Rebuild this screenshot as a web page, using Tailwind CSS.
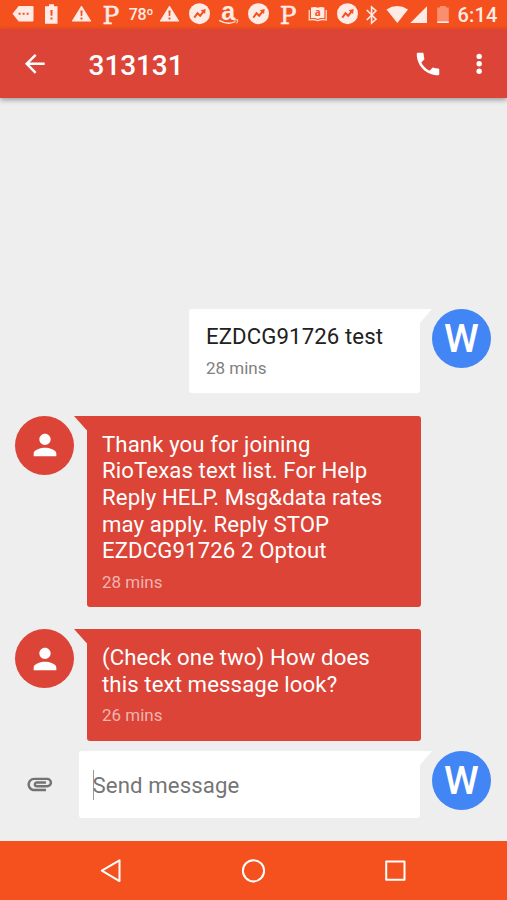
<!DOCTYPE html>
<html lang="en">
<head>
  <meta charset="UTF-8">
  <meta name="viewport" content="width=device-width, initial-scale=1.0">
  <title>Messenger - 313131</title>

  <!-- Tailwind CSS -->
  <script src="https://cdn.jsdelivr.net/npm/@tailwindcss/browser@4"></script>
</head>

<body class="bg-[#eeeeee] font-['Roboto',sans-serif]">

  <!-- Shared icons -->
  <svg class="hidden">
    <symbol id="warning" viewBox="0 0 30 29">
      <path d="M14.500 7.500 23.500 22H5.500Z" fill="#ffebe5" stroke="#ffebe5" stroke-width="1.200" stroke-linejoin="round"/>
      <path d="M13.400 11.500h2.200l-.4 5.500h-1.400zM13.500 18.500h2v2h-2z" fill="#f4511e"/>
    </symbol>
    <symbol id="trend" viewBox="0 0 30 29">
      <circle cx="14.500" cy="14.700" r="10.500" fill="#ffebe5"/>
      <path d="M9.300 18.600 12.500 14.200l2.700 2.600 3.600-4.700" fill="none" stroke="#f4511e" stroke-width="2"/>
      <path d="M15.700 11.200 20.700 10l-.6 5z" fill="#f4511e"/>
    </symbol>
    <symbol id="person" viewBox="0 0 24 24">
      <path d="M12 12c2.210 0 4-1.790 4-4s-1.790-4-4-4-4 1.790-4 4 1.790 4 4 4zm0 2c-2.670 0-8 1.340-8 4v2h16v-2c0-2.660-5.330-4-8-4z" fill="#fff"/>
    </symbol>
  </svg>

  <div class="flex h-[900px] w-[507px] flex-col overflow-hidden">

    <!-- Status bar -->
    <div class="flex h-[29px] shrink-0 items-center bg-[#f4511e] pl-[7.5px] text-[#ffebe5]">
      <div class="grid w-[354.6px] grid-cols-12">
        <svg class="h-[29px] w-[30px]" viewBox="0 0 30 29">
          <path d="M10.7 7H24.3Q25.5 7 25.5 8.2V21.3Q25.5 22.5 24.3 22.5H10.7L4.5 14.8Z" fill="#ffebe5"/>
          <path d="M10.6 13.8h2v2h-2zM14.6 13.8h2v2h-2zM18.6 13.8h2v2h-2z" fill="#f4511e"/>
        </svg>
        <svg class="h-[29px] w-[30px]" viewBox="0 0 30 29">
          <path d="M12 5.2h5v2h3.500v17.600H8V7.200h4z" fill="#ffebe5"/>
          <path d="M13.400 11h2.200l-.2 5.800h-1.800zM13.500 18.600h2v2h-2z" fill="#f4511e"/>
        </svg>
        <svg class="h-[29px] w-[30px]"><use href="#warning"/></svg>
        <span class="pt-0.5 text-center font-['DejaVu_Serif',serif] text-[25px] leading-[27px] [-webkit-text-stroke:0.5px_#ffebe5]"><span class="relative top-px">P</span></span>
        <span class="pl-px text-center text-[16px] leading-[31px] font-medium tracking-[-0.4px]">78º</span>
        <svg class="h-[29px] w-[30px]"><use href="#warning"/></svg>
        <svg class="h-[29px] w-[30px]"><use href="#trend"/></svg>
        <svg class="h-[29px] w-[30px] overflow-visible" viewBox="0 0 30 29">
          <text x="14.300" y="20.500" text-anchor="middle" class="font-['Liberation_Sans',sans-serif] text-[25px] font-bold" fill="#ffebe5">a</text>
          <path d="M5.200 21.300Q14 26.500 21.500 22.500" fill="none" stroke="#ffebe5" stroke-width="1.400"/>
          <path d="M19.500 20.900h4.300q.1 1.800-1.400 3.400" fill="none" stroke="#ffebe5" stroke-width="1"/>
        </svg>
        <svg class="h-[29px] w-[30px]"><use href="#trend"/></svg>
        <span class="pt-0.5 text-center font-['DejaVu_Serif',serif] text-[25px] leading-[27px] [-webkit-text-stroke:0.5px_#ffebe5]"><span class="relative top-px">P</span></span>
        <svg class="h-[29px] w-[30px]" viewBox="0 0 30 29">
          <path d="M8 8.500q4-1.300 6.700.3 2.700-1.600 6.700-.3v10.800q-4-1-6.700.6-2.700-1.600-6.700-.6z" fill="#ffebe5"/>
          <path d="M6.200 11v10q5-1 8.500.7 3.500-1.700 8.500-.7V11" fill="none" stroke="#ffebe5" stroke-width="1.100"/>
          <text x="14.700" y="17.300" text-anchor="middle" class="font-['Open_Sans',sans-serif] text-[10px] font-bold" fill="#f4511e">a</text>
        </svg>
        <svg class="h-[29px] w-[30px]"><use href="#trend"/></svg>
      </div>
      <svg class="h-[29px] w-[92px]" viewBox="362 0 92 29">
        <path d="M366.800 10 376 19.300 371.600 23V7L376 10.700 366.800 20" fill="none" stroke="#ffebe5" stroke-width="1.600"/>
        <path d="M397.300 23 386.500 9.400Q397.300 2.600 408 9.400Z" fill="#ffebe5"/>
        <path d="M427 6.300V23H410.300Z" fill="#ffebe5"/>
        <path d="M440 6h6v1.500h2.800V21.500h-11.600V7.500h2.800z" fill="#f98f6f"/>
        <path d="M437.200 21.300h11.600V23h-11.600z" fill="#ffebe5"/>
      </svg>
      <span class="ml-[3.5px] pt-px text-[20px] leading-[30px] font-medium tracking-[0.1px]">6:14</span>
    </div>

    <!-- App bar -->
    <header class="z-10 flex h-[69px] shrink-0 items-center bg-[#db4437] pr-[13px] pl-5 text-white shadow-[0_2px_5px_rgba(0,0,0,0.35)]">
      <svg class="size-[29.6px]" viewBox="0 0 24 24" fill="currentColor">
        <path d="M20 11H7.830l5.590-5.590L12 4l-8 8 8 8 1.410-1.410L7.830 13H20v-2z"/>
      </svg>
      <h1 class="ml-[39px] grow pt-[5px] text-[28px] leading-8 font-medium tracking-[-0.1px]">313131</h1>
      <svg class="mr-[21px] size-[30px]" viewBox="0 0 24 24" fill="currentColor">
        <path d="M6.620 10.790c1.440 2.830 3.760 5.140 6.590 6.590l2.200-2.200c.27-.27.67-.36 1.020-.24 1.120.37 2.330.57 3.570.57.55 0 1 .45 1 1V20c0 .55-.45 1-1 1-9.390 0-17-7.610-17-17 0-.55.45-1 1-1h3.500c.55 0 1 .45 1 1 0 1.250.2 2.450.57 3.570.11.35.03.74-.25 1.020l-2.200 2.200z"/>
      </svg>
      <svg class="size-[29.6px]" viewBox="0 0 24 24" fill="currentColor">
        <circle cx="12.300" cy="6" r="2.200"/><circle cx="12.300" cy="12" r="2.200"/><circle cx="12.300" cy="18" r="2.200"/>
      </svg>
    </header>

    <!-- Conversation -->
    <main class="flex grow flex-col justify-end text-[22.200px] leading-[26.700px] tracking-[0.100px]">
      <div class="flex items-start justify-end pr-4">
        <div class="h-[84.500px] w-[231px] rounded-[3px] rounded-tr-none bg-white pt-[14.500px] pl-[17px]">
          <p class="text-[#212121]">EZDCG91726 test</p>
          <p class="mt-[8px] text-[17px] leading-5 tracking-normal text-[#808080]">28 mins</p>
        </div>
        <svg class="h-[14px] w-3" viewBox="0 0 12 14"><path d="M0 0h12L0 14z" fill="#fff"/></svg>
        <div class="flex size-[59px] items-center justify-center rounded-full bg-[#4285f4] pt-0.5 text-[39.500px] font-medium tracking-normal text-white">W</div>
      </div>

      <div class="mt-[22.500px] flex items-start pl-[15px]">
        <div class="flex size-[59px] items-center justify-center rounded-full bg-[#db4437]">
          <svg class="size-[34px]"><use href="#person"/></svg>
        </div>
        <svg class="-mr-px h-[14px] w-[13.500px]" viewBox="0 0 13.500 14"><path d="M0 0h13.500v14h-1z" fill="#db4437"/></svg>
        <div class="h-[191px] w-[334.500px] rounded-[3px] rounded-tl-none bg-[#db4437] pt-[15px] pl-[15.500px] text-white">
          <p>Thank you for joining<br>RioTexas text list. For Help<br>Reply HELP. Msg&amp;data rates<br>may apply. Reply STOP<br>EZDCG91726 2 Optout</p>
          <p class="mt-[7.500px] text-[17px] leading-5 tracking-normal text-[#f1b4af]">28 mins</p>
        </div>
      </div>

      <div class="mt-[22.500px] flex items-start pl-[15px]">
        <div class="flex size-[59px] items-center justify-center rounded-full bg-[#db4437]">
          <svg class="size-[34px]"><use href="#person"/></svg>
        </div>
        <svg class="-mr-px h-[14px] w-[13.500px]" viewBox="0 0 13.500 14"><path d="M0 0h13.500v14h-1z" fill="#db4437"/></svg>
        <div class="h-[111.500px] w-[334.500px] rounded-[3px] rounded-tl-none bg-[#db4437] pt-[15px] pl-[15.500px] text-white">
          <p>(Check one two) How does<br>this text message look?</p>
          <p class="mt-[8px] text-[17px] leading-5 tracking-normal text-[#f1b4af]">26 mins</p>
        </div>
      </div>

      <!-- Compose row -->
      <div class="mt-[10.500px] mb-[23px] flex items-start pr-4 pl-[25px]">
        <svg class="mt-[18px] mr-[24.500px] size-[29.600px]" viewBox="0 0 24 24" fill="#737373">
          <path d="M2 12.500C2 9.460 4.460 7 7.500 7H18c2.210 0 4 1.790 4 4s-1.790 4-4 4H9.500C8.120 15 7 13.880 7 12.500S8.120 10 9.500 10H17v2H9.410c-.55 0-.55 1 0 1H18c1.100 0 2-.9 2-2s-.9-2-2-2H7.500C5.570 9 4 10.570 4 12.500S5.570 16 7.500 16H17v2H7.500C4.460 18 2 15.540 2 12.500z"/>
        </svg>
        <div class="flex h-[67px] grow items-center rounded-[3px] rounded-tr-none bg-white pl-[13.500px]">
          <span class="h-[30px] w-px bg-[#9a9a9a]"></span>
          <span class="-ml-px pt-0.5 text-[#757575]">Send message</span>
        </div>
        <svg class="h-[14px] w-3" viewBox="0 0 12 14"><path d="M0 0h12L0 14z" fill="#fff"/></svg>
        <div class="flex size-[59px] items-center justify-center rounded-full bg-[#4285f4] pt-0.5 text-[39.500px] font-medium tracking-normal text-white">W</div>
      </div>
    </main>

    <!-- Navigation bar -->
    <nav class="flex h-[59px] shrink-0 items-center justify-between bg-[#f4511e] pr-[99px] pl-[97px]">
      <svg class="size-[26px]" viewBox="0 0 26 26" fill="none" stroke="#fff" stroke-width="2" stroke-linejoin="round">
        <path d="M22.500 2.300v20.800L4.800 12.700z"/>
      </svg>
      <svg class="size-[26px]" viewBox="0 0 26 26" fill="none" stroke="#fff" stroke-width="2">
        <circle cx="13.500" cy="12.800" r="10.600"/>
      </svg>
      <svg class="size-[26px]" viewBox="0 0 26 26" fill="none" stroke="#fff" stroke-width="2" stroke-linejoin="round">
        <path d="M4.200 3.500h18.300v18.300H4.200z"/>
      </svg>
    </nav>

  </div>

</body>
</html>
